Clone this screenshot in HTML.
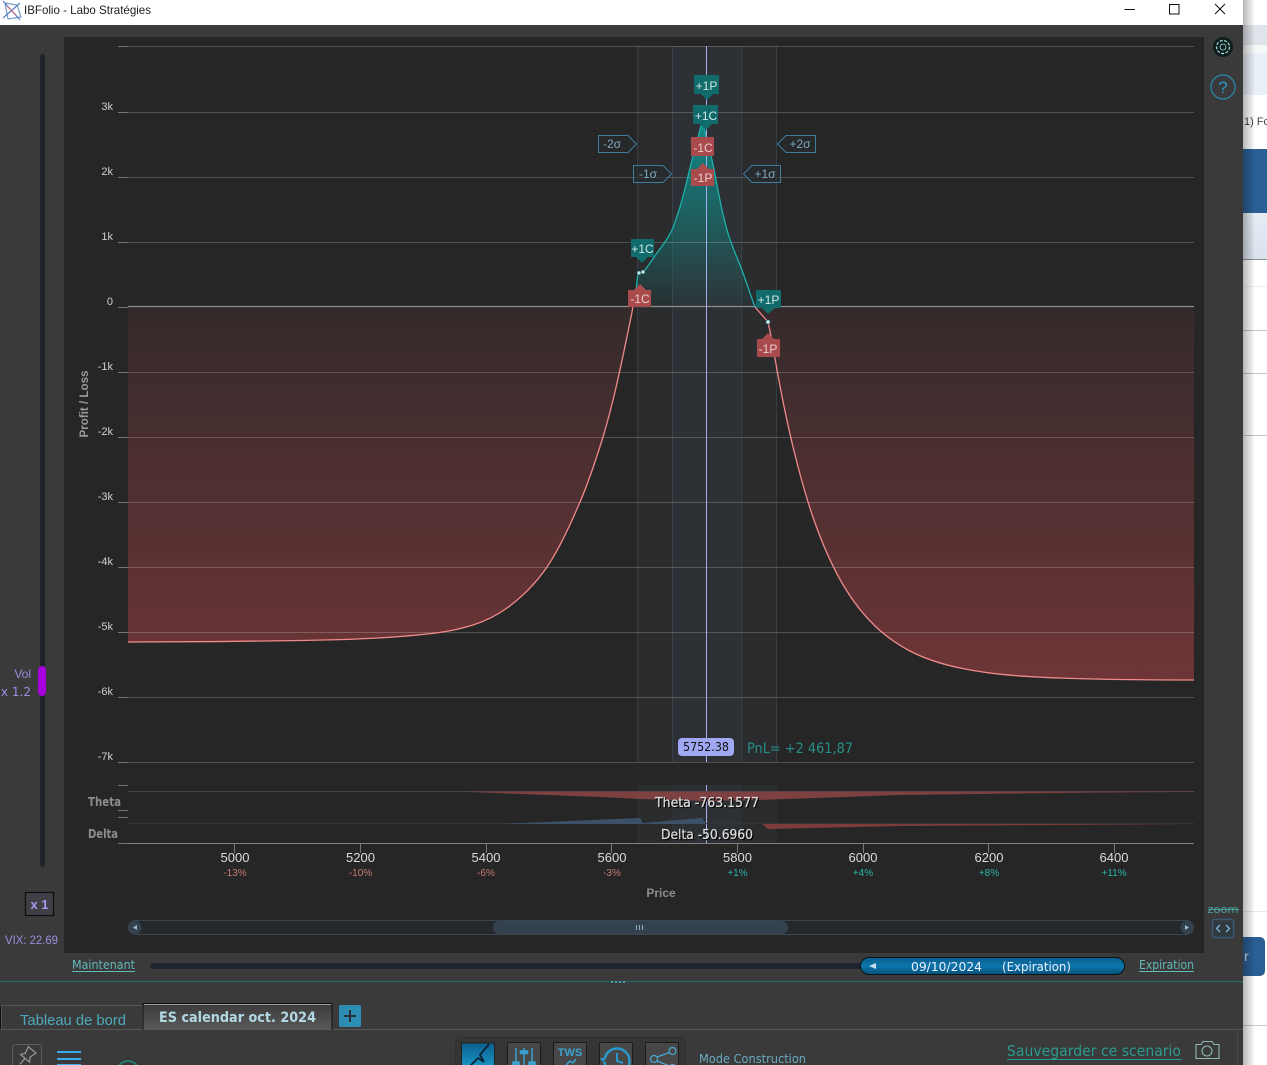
<!DOCTYPE html>
<html><head><meta charset="utf-8"><title>IBFolio - Labo Stratégies</title>
<style>html,body{margin:0;padding:0;background:#fff;overflow:hidden}svg{display:block}text{font-family:"Liberation Sans",sans-serif}.d{font-family:"DejaVu Sans",sans-serif}</style>
</head><body>
<svg xmlns="http://www.w3.org/2000/svg" width="1267" height="1065" viewBox="0 0 1267 1065">
<defs>
<linearGradient id="red" gradientUnits="userSpaceOnUse" x1="0" y1="307" x2="0" y2="680"><stop offset="0" stop-color="#342a2b"/><stop offset="1" stop-color="#6e3537"/></linearGradient>
<linearGradient id="teal" gradientUnits="userSpaceOnUse" x1="0" y1="130" x2="0" y2="307"><stop offset="0" stop-color="#128784"/><stop offset="1" stop-color="#128784" stop-opacity=".04"/></linearGradient>
<linearGradient id="pill" x1="0" y1="0" x2="0" y2="1"><stop offset="0" stop-color="#0a5d8c"/><stop offset=".5" stop-color="#0c77ab"/><stop offset="1" stop-color="#075078"/></linearGradient>
<linearGradient id="tab" x1="0" y1="0" x2="0" y2="1"><stop offset="0" stop-color="#3a3a3a"/><stop offset="1" stop-color="#5a5a5a"/></linearGradient>
<linearGradient id="shadow" x1="0" y1="0" x2="1" y2="0"><stop offset="0" stop-color="#000" stop-opacity=".28"/><stop offset="1" stop-color="#000" stop-opacity="0"/></linearGradient>
<linearGradient id="bt" x1="0" y1="0" x2="0" y2="1"><stop offset="0" stop-color="#0d5f8c"/><stop offset="1" stop-color="#19a3d6"/></linearGradient>
<linearGradient id="lb" x1="0" y1="0" x2="0" y2="1"><stop offset="0" stop-color="#e6ecf4"/><stop offset="1" stop-color="#d9e2ec"/></linearGradient>
</defs>

<!-- background page at right -->
<rect x="1243" y="0" width="24" height="1065" fill="#fff"/>
<rect x="1243" y="25" width="24" height="20" fill="#dfe4ea"/>
<rect x="1243" y="45" width="24" height="9" fill="#f5f6f8"/>
<rect x="1243" y="54" width="24" height="41" fill="#e9eff7"/>
<rect x="1243" y="149" width="24" height="64" fill="#2a5f95"/>
<rect x="1243" y="213" width="24" height="46" fill="url(#lb)"/>
<g fill="#c4c4c4"><rect x="1243" y="259" width="24" height="1" fill="#8e8e8e"/><rect x="1243" y="286" width="24" height="1" fill="#eee"/><rect x="1243" y="330" width="24" height="1"/><rect x="1243" y="373" width="24" height="1"/><rect x="1243" y="435" width="24" height="1"/><rect x="1243" y="911" width="24" height="1" fill="#e8e8e8"/><rect x="1243" y="1025" width="24" height="1" fill="#ccc"/></g>
<text x="1244" y="125" font-size="11" fill="#444">1) Fc</text>
<rect x="1230" y="937" width="35" height="39" rx="5" fill="#2a5f95"/>
<text x="1244" y="961" font-size="14" fill="#ddd">r</text>
<rect x="1243" y="0" width="12" height="1065" fill="url(#shadow)"/>

<!-- window -->
<rect x="0" y="25" width="1243" height="1040" fill="#3a3a3a"/>
<rect x="0" y="0" width="1243" height="25" fill="#fff"/>
<g fill="none" stroke-width="1.2">
<path d="M5 3L17 5L21 17L8 19Z" stroke="#7a9ccc"/><path d="M3 1L20 20M20 3L3 18" stroke="#5b82c0"/><path d="M7 6L16 15" stroke="#d0708a"/>
</g>
<text x="24" y="14" font-size="12" fill="#222" textLength="127" lengthAdjust="spacingAndGlyphs">IBFolio - Labo Stratégies</text>
<path d="M1124.500 9.500H1135" stroke="#111" stroke-width="1"/>
<rect x="1169.500" y="4.500" width="9.500" height="9.500" fill="none" stroke="#111"/>
<path d="M1215 4L1225 14M1225 4L1215 14" stroke="#111"/>

<!-- chart panel -->
<rect x="64" y="37" width="1140" height="916" fill="#262626"/>

<!-- side bands -->
<g fill="#5f7f96" fill-opacity=".075">
<rect x="637" y="46" width="140" height="716"/><rect x="672" y="46" width="70" height="716"/>
<rect x="637" y="785" width="140" height="58"/><rect x="672" y="785" width="70" height="58"/>
</g>
<g stroke="#4a6270" stroke-opacity=".35"><path d="M637.500 46V762M672.500 46V762M741.500 46V762M776.500 46V762"/></g>

<!-- fills -->
<path fill="url(#red)" d="M128 307V642C185.300 642 242.700 641.400 300 640.500C333.300 640 366.700 639.200 400 636.500C424.300 634.550 448.700 632.800 473 625C484.300 621.400 495.700 616.200 507 608C520.300 598.400 533.700 586.300 547 567C558 551 569 527.900 580 502C587.700 484 595.300 461.900 603 437C606.300 426.200 609.700 413.300 613 400C619.700 373.300 626.300 340.300 633 307Z"/>
<path fill="url(#red)" d="M755 307C759 312 764 317 768 322C771 335 774 352 777 370C783 403 789 431 795 455C801.700 481.700 808.300 504.300 815 523C825 551 835 571.600 845 588C855 604.400 865 616.400 875 626C886.700 637.200 898.300 644.900 910 651C926.700 659.700 943.300 664.500 960 668C993.300 675 1026.700 676.800 1060 678C1104.700 679.600 1149.300 680 1194 680V307Z"/>
<path fill="url(#teal)" d="M633 307L636 291 638 273 643 272C647.700 267.300 652.300 259.500 657 253C662 246 667 240.500 672 230C674.300 225.100 676.700 217 679 210C683.300 197 687.700 176.900 692 160C695.300 147.100 698.700 135.200 702 122L704 128C706.700 138.700 709.300 148.300 712 160C715.300 175 718.700 195 722 210C723.700 217 725.300 224 727 230C732.300 248.100 737.700 258.300 743 273C747 284 751 296.200 755 307Z"/>

<!-- grid -->
<g stroke="#fff" stroke-opacity=".2">
<path d="M128 46.500H1194M128 112.500H1194M128 177.500H1194M128 242.500H1194M128 372.500H1194M128 437.500H1194M128 502.500H1194M128 567.500H1194M128 632.500H1194M128 697.500H1194M128 762.500H1194"/>
</g>
<g stroke="#777"><path d="M118 46.500H128M118 112.500H128M118 177.500H128M118 242.500H128M118 307.500H128M118 372.500H128M118 437.500H128M118 502.500H128M118 567.500H128M118 632.500H128M118 697.500H128M118 762.500H128M118 785.500H128M118 810.500H128M118 817.500H128M118 843.500H128"/></g>
<path d="M128 306.500H1194" stroke="#8f8f8f" stroke-width="1.200"/>

<!-- curves -->
<g fill="none" stroke-linejoin="round" stroke-width="1.300">
<path stroke="#f08a8a" d="M128 642C185.300 642 242.700 641.400 300 640.500C333.300 640 366.700 639.200 400 636.500C424.300 634.550 448.700 632.800 473 625C484.300 621.400 495.700 616.200 507 608C520.300 598.400 533.700 586.300 547 567C558 551 569 527.900 580 502C587.700 484 595.300 461.900 603 437C606.300 426.200 609.700 413.300 613 400C619.700 373.300 626.300 340.300 633 307"/>
<path stroke="#f08a8a" d="M755 307C759 312 764 317 768 322C771 335 774 352 777 370C783 403 789 431 795 455C801.700 481.700 808.300 504.300 815 523C825 551 835 571.600 845 588C855 604.400 865 616.400 875 626C886.700 637.200 898.300 644.900 910 651C926.700 659.700 943.300 664.500 960 668C993.300 675 1026.700 676.800 1060 678C1104.700 679.600 1149.300 680 1194 680"/>
<path stroke="#1cb0a8" d="M633 307L636 291 638 273M643 272C647.700 267.300 652.300 259.500 657 253C662 246 667 240.500 672 230C674.300 225.100 676.700 217 679 210C683.300 197 687.700 176.900 692 160C695.300 147.100 698.700 135.200 702 122L704 128C706.700 138.700 709.300 148.300 712 160C715.300 175 718.700 195 722 210C723.700 217 725.300 224 727 230C732.300 248.100 737.700 258.300 743 273C747 284 751 296.200 755 307"/>
</g>
<g fill="#bfe8e2" stroke="#145" stroke-width=".6"><circle cx="639" cy="273" r="2"/><circle cx="643" cy="272" r="2"/><circle cx="768" cy="322" r="2.200"/><circle cx="702" cy="122" r="1.800"/></g>

<!-- vertical cursor -->
<path d="M706.500 46V762M706.500 785V843" stroke="#a6aef0" stroke-width="1"/>

<!-- position tags -->
<g fill="#116b6b">
<path d="M694 75H719V94H713L707 100 701 94H694Z"/>
<path d="M693 105H718V124H712L706 130 700 124H693Z"/>
<path d="M631 239H654V257H648L642 263 636 257H631Z"/>
<path d="M756 290H781V308H775L768 314 762 308H756Z"/>
</g>
<g fill="#a94a4c">
<path d="M691 137H714V156H691Z"/><path d="M691 169H697L703 163 709 169H714V186H691Z"/>
<path d="M628 290H634L640 284 646 290H651V307H628Z"/><path d="M757 339H762L768 333 774 339H780V357H757Z"/>
</g>
<g font-size="12" text-anchor="middle">
<g fill="#cfe6e6"><text x="706.500" y="90">+1P</text><text x="706" y="120">+1C</text><text x="642.500" y="253">+1C</text><text x="768.500" y="304">+1P</text></g>
<g fill="#eccccc"><text x="703" y="152">-1C</text><text x="703" y="182">-1P</text><text x="640" y="303">-1C</text><text x="768" y="353">-1P</text></g>
</g>

<!-- sigma tags -->
<g fill="#262a2d" fill-opacity=".6" stroke="#3f7d9d" stroke-width="1">
<path d="M598.500 135.500H628L636.500 144 628 152.500H598.500Z"/>
<path d="M633.500 165.500H663L671.500 174 663 182.500H633.500Z"/>
<path d="M815.500 135.500H786L777.500 144 786 152.500H815.500Z"/>
<path d="M780.500 165.500H752L743.500 174 752 182.500H780.500Z"/>
</g>
<g font-size="12" fill="#7fa9bd" text-anchor="middle">
<text x="612" y="148">-2σ</text><text x="648" y="178">-1σ</text><text x="800" y="148">+2σ</text><text x="765" y="178">+1σ</text>
</g>

<!-- y labels -->
<g font-size="11" fill="#cfcfcf" text-anchor="end">
<text x="113" y="110">3k</text><text x="113" y="175">2k</text><text x="113" y="240">1k</text><text x="113" y="305">0</text>
<text x="113" y="370">-1k</text><text x="113" y="435">-2k</text><text x="113" y="500">-3k</text><text x="113" y="565">-4k</text>
<text x="113" y="630">-5k</text><text x="113" y="695">-6k</text><text x="113" y="760">-7k</text>
</g>
<text transform="translate(88,404) rotate(-90)" font-size="12" font-weight="bold" fill="#999" text-anchor="middle" textLength="67" lengthAdjust="spacingAndGlyphs">Profit / Loss</text>

<!-- greeks -->
<path d="M128 791.500H1194" stroke="#3e474e"/>
<path d="M128 823.500H1194" stroke="#353535"/>
<path d="M470 792L600 797 640 799 706 801 760 800 900 795 1100 792.500 1194 792V791.500H470Z" fill="#7d4142"/>
<path d="M500 824L640 818 643 823 702 818 706 824Z" fill="#3c5168"/>
<path d="M706 824H762L768 829 900 826 1194 824Z" fill="#7d3c3c"/>
<g font-size="12" font-weight="bold" fill="#8d8d8d">
<text class="d" x="88" y="806" textLength="33" lengthAdjust="spacingAndGlyphs">Theta</text>
<text class="d" x="88" y="838" textLength="30" lengthAdjust="spacingAndGlyphs">Delta</text>
</g>
<g font-size="13" fill="#ddd">
<text class="d" x="656" y="808" fill="#000" stroke="#000" stroke-width=".5" textLength="104" lengthAdjust="spacingAndGlyphs">Theta -763.1577</text>
<text class="d" x="655" y="807" stroke="#ddd" stroke-width=".25" textLength="104" lengthAdjust="spacingAndGlyphs">Theta -763.1577</text>
<text class="d" x="662" y="840" fill="#000" stroke="#000" stroke-width=".5" textLength="92" lengthAdjust="spacingAndGlyphs">Delta -50.6960</text>
<text class="d" x="661" y="839" stroke="#ddd" stroke-width=".25" textLength="92" lengthAdjust="spacingAndGlyphs">Delta -50.6960</text>
</g>

<!-- x axis -->
<path d="M128 843.500H1194" stroke="#828282"/>
<g stroke="#777"><path d="M234.500 843V853M360.500 843V853M486.500 843V853M611.500 843V853M737.500 843V853M863.500 843V853M988.500 843V853M1114.500 843V853"/></g>
<g font-size="13" fill="#dcdcdc" text-anchor="middle">
<text x="235" y="862">5000</text><text x="360.500" y="862">5200</text><text x="486" y="862">5400</text><text x="612" y="862">5600</text>
<text x="737.500" y="862">5800</text><text x="863" y="862">6000</text><text x="989" y="862">6200</text><text x="1114" y="862">6400</text>
</g>
<g font-size="10" text-anchor="middle">
<g fill="#c67a78"><text x="235" y="876">-13%</text><text x="360.500" y="876">-10%</text><text x="486" y="876">-6%</text><text x="612" y="876">-3%</text></g>
<g fill="#29b5a6"><text x="737.500" y="876">+1%</text><text x="863" y="876">+4%</text><text x="989" y="876">+8%</text><text x="1114" y="876">+11%</text></g>
</g>
<text x="661" y="897" font-size="12" font-weight="bold" fill="#8d8d8d" text-anchor="middle">Price</text>

<!-- price badge -->
<rect x="678" y="738" width="56" height="18" rx="4" fill="#a1a8f3"/>
<text class="d" x="706" y="751" font-size="12" fill="#111" text-anchor="middle" textLength="46" lengthAdjust="spacingAndGlyphs">5752.38</text>
<text class="d" x="747" y="753" font-size="14" fill="#25908a" textLength="106" lengthAdjust="spacingAndGlyphs">PnL= +2 461,87</text>

<!-- scrollbar -->
<rect x="128.500" y="920.500" width="1065" height="14" rx="7" fill="#26292b" stroke="#3a4650"/>
<rect x="493" y="921" width="295" height="13" rx="6.500" fill="#33424e"/>
<circle cx="135" cy="927.500" r="6.500" fill="#33424e"/><circle cx="1187" cy="927.500" r="6.500" fill="#33424e"/>
<path d="M137 925L133 927.500 137 930Z" fill="#9bc"/><path d="M1185 925L1189 927.500 1185 930Z" fill="#9bc"/>
<path d="M636.500 925V930M639.500 925V930M642.500 925V930" stroke="#8fb0c4"/>

<!-- right icons -->
<circle cx="1223" cy="47" r="10" fill="#0e1e1e"/>
<circle cx="1223" cy="47" r="6.500" fill="none" stroke="#a5e0d8" stroke-dasharray="3 1.500" stroke-width="1.200"/>
<circle cx="1223" cy="47" r="3" fill="none" stroke="#a5e0d8" stroke-width=".8"/>
<circle cx="1223" cy="87" r="12" fill="none" stroke="#2a88b0" stroke-width="1.200"/>
<text x="1223" y="93" font-size="17" fill="#2a9bc8" text-anchor="middle">?</text>
<text class="d" x="1223" y="913" font-size="11" fill="#4aa39c" text-anchor="middle" textLength="31" lengthAdjust="spacingAndGlyphs">zoom</text>
<path d="M1208 909.500H1239" stroke="#4aa39c"/>
<rect x="1212.500" y="919.500" width="21" height="18" rx="2" fill="#303840" stroke="#3c5a78" stroke-width="1.500"/>
<path d="M1220 925L1216.500 928.500 1220 932M1226 925L1229.500 928.500 1226 932" fill="none" stroke="#7cb0d0" stroke-width="1.400"/>

<!-- left slider -->
<rect x="40" y="54" width="5" height="813" rx="2.500" fill="#20222c"/>
<rect x="38" y="666" width="8" height="30" rx="4" fill="#a600df"/>
<text x="31" y="678" font-size="12" fill="#a08ae0" text-anchor="end">Vol</text>
<text class="d" x="31" y="696" font-size="12" fill="#a08ae0" text-anchor="end" textLength="30" lengthAdjust="spacingAndGlyphs">x 1.2</text>
<rect x="25.500" y="892.500" width="28" height="23" fill="#3f3f46" stroke="#0e0e0e" stroke-width="1.200"/>
<text x="39.500" y="909" font-size="13" font-weight="bold" fill="#a896ee" text-anchor="middle">x 1</text>
<text x="5" y="944" font-size="12" fill="#9b8fe0" textLength="53" lengthAdjust="spacingAndGlyphs">VIX: 22.69</text>

<!-- timeline -->
<text class="d" x="72" y="969" font-size="12" fill="#64b9b8" textLength="63" lengthAdjust="spacingAndGlyphs">Maintenant</text>
<path d="M72 971.500H135" stroke="#64b9b8"/>
<rect x="150" y="963" width="720" height="6" rx="3" fill="#1f2430"/>
<rect x="860.500" y="957.500" width="264" height="17" rx="8.500" fill="url(#pill)" stroke="#06131a"/>
<path d="M876 963L869 966 876 969Z" fill="#cde"/>
<text class="d" x="911" y="971" font-size="12" fill="#eef" textLength="71" lengthAdjust="spacingAndGlyphs">09/10/2024</text>
<text class="d" x="1002" y="971" font-size="12" fill="#eef" textLength="69" lengthAdjust="spacingAndGlyphs">(Expiration)</text>
<text class="d" x="1139" y="969" font-size="12" fill="#64b9b8" textLength="55" lengthAdjust="spacingAndGlyphs">Expiration</text>
<path d="M1139 971.500H1194" stroke="#64b9b8"/>

<rect x="0" y="981" width="1243" height="1" fill="#1f6f66"/>
<path d="M611 982H627" stroke="#4a9ab0" stroke-dasharray="2 2" stroke-width="2"/>

<!-- tabs -->
<rect x="1.500" y="1005.500" width="141" height="24" fill="#3a3a3a" stroke="#555"/>
<rect x="0" y="1006" width="1" height="23" fill="#111"/>
<text x="20" y="1025" font-size="15" fill="#4ea9bb" textLength="106" lengthAdjust="spacingAndGlyphs">Tableau de bord</text>
<path d="M1 1029.500H1243" stroke="#565656"/>
<rect x="143" y="1004" width="189" height="26" fill="url(#tab)"/>
<path d="M143 1030V1003.500H332V1030" fill="none" stroke="#0e0e0e"/>
<path d="M144 1004.500H331" stroke="#999"/>
<text class="d" x="159" y="1022" font-size="14" font-weight="bold" fill="#b2d8e4" textLength="157" lengthAdjust="spacingAndGlyphs">ES calendar oct. 2024</text>
<rect x="339" y="1005" width="22" height="22" rx="2" fill="#2e8db3"/>
<path d="M350 1010V1022M344 1016H356" stroke="#23333c" stroke-width="2"/>

<!-- toolbar -->
<path d="M1237.500 1030V1065" stroke="#4c4c4c"/>
<rect x="12.500" y="1044.500" width="29" height="30" rx="3" fill="none" stroke="#5c5c5c"/>
<g transform="translate(27,1056) rotate(40)" fill="none" stroke="#999" stroke-width="1.200"><path d="M-5 -8H5L3 -1 6 3H-6L-3 -1ZM0 3V11"/></g>
<g fill="#3aaeea"><rect x="57" y="1051" width="24" height="2"/><rect x="57" y="1058" width="24" height="2"/><rect x="57" y="1064" width="24" height="2"/></g>
<circle cx="128" cy="1072" r="11" fill="none" stroke="#1f8c80" stroke-width="1.500"/>

<rect x="455.500" y="1037.500" width="230" height="40" rx="6" fill="#2e2e2e" fill-opacity=".35" stroke="#303030"/>
<rect x="461.500" y="1043" width="33" height="30" fill="url(#bt)" stroke="#222"/>
<path d="M470 1066L478 1058 484 1062 480 1055 489 1044" fill="none" stroke="#092433" stroke-width="1.800"/>
<g fill="#474747" stroke="#1c1c1c"><rect x="507.500" y="1042.500" width="33" height="30"/><rect x="553.500" y="1042.500" width="33" height="30"/><rect x="599.500" y="1042.500" width="33" height="30"/><rect x="645.500" y="1042.500" width="33" height="30"/></g>
<g stroke="#39a0cf" stroke-width="1.500" fill="#39a0cf"><path d="M516 1048V1065M524 1048V1065M532 1048V1065" fill="none"/><rect x="520.500" y="1051" width="7" height="2.500"/><rect x="513" y="1062" width="6" height="3"/><rect x="529" y="1062" width="6" height="3"/></g>
<text x="570" y="1056" font-size="11" font-weight="bold" fill="#3ba3d2" text-anchor="middle">TWS</text>
<path d="M566 1065L570 1061 573 1063 576 1059" fill="none" stroke="#3ba3d2" stroke-width="1.500"/>
<circle cx="617" cy="1061" r="12.500" fill="none" stroke="#2a98cc" stroke-width="2.500"/>
<path d="M617 1053V1061L623 1063" fill="none" stroke="#2a98cc" stroke-width="2"/>
<path d="M603 1060H610" stroke="#474747" stroke-width="3"/>
<path d="M606 1058L603 1062 600 1058Z" fill="#2a98cc"/>
<g fill="none" stroke="#48a6cc" stroke-width="1.300"><circle cx="672.500" cy="1051" r="3.500"/><circle cx="654" cy="1059" r="3.500"/><circle cx="672.500" cy="1068" r="3.500"/><path d="M657 1057L669.500 1052.500M657 1061L669.500 1066"/></g>
<text class="d" x="699" y="1063" font-size="12" fill="#6aa9c2" textLength="107" lengthAdjust="spacingAndGlyphs">Mode Construction</text>

<text class="d" x="1007" y="1056" font-size="15" fill="#2b9a8e" textLength="174" lengthAdjust="spacingAndGlyphs">Sauvegarder ce scenario</text>
<path d="M1007 1059.500H1182" stroke="#2b9a8e"/>
<g fill="none" stroke="#8fb8b4" stroke-width="1.100"><path d="M1196 1044.500H1201L1203 1041.500H1212L1214 1044.500H1219V1058.500H1196Z"/><circle cx="1207" cy="1051" r="5"/></g>
</svg>
</body></html>
